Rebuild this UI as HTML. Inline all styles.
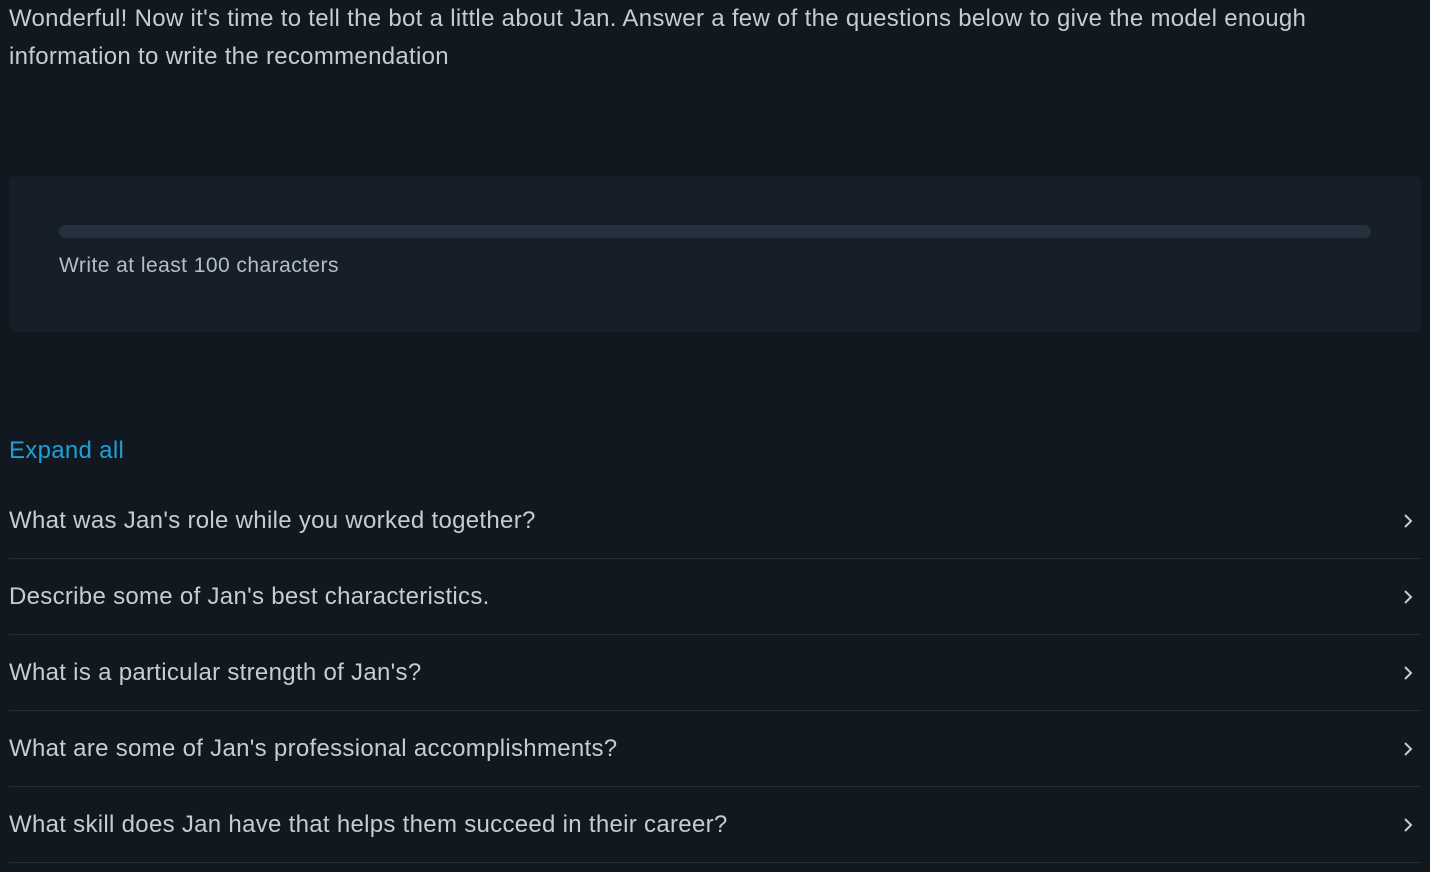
<!DOCTYPE html><html><head><style>
body{margin:0;background:#12181f;font-family:"Liberation Sans",sans-serif;color:#c4ccd4;width:1430px;height:872px;overflow:hidden;position:relative;letter-spacing:0.3px}
.intro{position:absolute;left:9px;top:0;width:1345px;font-size:24px;line-height:38px}
.card{position:absolute;left:9px;top:176px;width:1412px;height:156px;background:#161f27;border-radius:6px}
.bar{position:absolute;left:50px;top:49px;width:1312px;height:13px;background:#24323d;border-radius:7px}
.hint{position:absolute;left:50px;top:78px;font-size:21px;color:#b4bec8;letter-spacing:0.45px}
.exp{position:absolute;left:9px;top:437px;font-size:24px;color:#1ea0d6}
.row{position:absolute;left:9px;width:1412px;height:75px;border-bottom:1px solid #232e37;font-size:24px;line-height:75px}
.row svg{position:absolute;right:8px;top:30px}
</style></head><body>
<div class="intro">Wonderful! Now it's time to tell the bot a little about Jan. Answer a few of the questions below to give the model enough information to write the recommendation</div>
<div class="card"><div class="bar"></div><div class="hint">Write at least 100 characters</div></div>
<div class="exp">Expand all</div>
<div class="row" style="top:483px">What was Jan's role while you worked together?<svg width="10" height="16"><path d="M2 2l6 6-6 6" stroke="#c4ccd4" stroke-width="2" fill="none"/></svg></div>
<div class="row" style="top:559px">Describe some of Jan's best characteristics.<svg width="10" height="16"><path d="M2 2l6 6-6 6" stroke="#c4ccd4" stroke-width="2" fill="none"/></svg></div>
<div class="row" style="top:635px">What is a particular strength of Jan's?<svg width="10" height="16"><path d="M2 2l6 6-6 6" stroke="#c4ccd4" stroke-width="2" fill="none"/></svg></div>
<div class="row" style="top:711px">What are some of Jan's professional accomplishments?<svg width="10" height="16"><path d="M2 2l6 6-6 6" stroke="#c4ccd4" stroke-width="2" fill="none"/></svg></div>
<div class="row" style="top:787px">What skill does Jan have that helps them succeed in their career?<svg width="10" height="16"><path d="M2 2l6 6-6 6" stroke="#c4ccd4" stroke-width="2" fill="none"/></svg></div>
</body></html>
